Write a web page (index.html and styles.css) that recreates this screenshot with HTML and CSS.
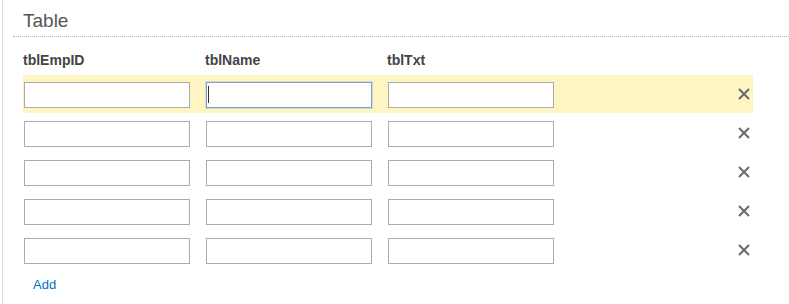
FILE: index.html
```html
<!DOCTYPE html>
<html lang="en">
<head>
    <meta charset="UTF-8">
    <meta name="viewport" content="width=device-width, initial-scale=1.0">
    <title>Table</title>
    <link rel="stylesheet" href="styles.css">
</head>
<body>
    <div class="panel">
        <h2 class="panel-title">Table</h2>

        <div class="grid-table">
            <div class="grid-head">
                <span>tblEmpID</span>
                <span>tblName</span>
                <span>tblTxt</span>
            </div>

            <div class="grid-row is-active">
                <input type="text" class="cell">
                <span class="cell-wrap">
                    <input type="text" class="cell is-focused">
                    <span class="caret"></span>
                </span>
                <input type="text" class="cell">
                <span class="remove" title="Delete">
                    <svg width="12" height="12" viewBox="0 0 12 12"><path d="M1 1 L11 11 M11 1 L1 11"/></svg>
                </span>
            </div>
            <div class="grid-row">
                <input type="text" class="cell">
                <input type="text" class="cell">
                <input type="text" class="cell">
                <span class="remove" title="Delete">
                    <svg width="12" height="12" viewBox="0 0 12 12"><path d="M1 1 L11 11 M11 1 L1 11"/></svg>
                </span>
            </div>
            <div class="grid-row">
                <input type="text" class="cell">
                <input type="text" class="cell">
                <input type="text" class="cell">
                <span class="remove" title="Delete">
                    <svg width="12" height="12" viewBox="0 0 12 12"><path d="M1 1 L11 11 M11 1 L1 11"/></svg>
                </span>
            </div>
            <div class="grid-row">
                <input type="text" class="cell">
                <input type="text" class="cell">
                <input type="text" class="cell">
                <span class="remove" title="Delete">
                    <svg width="12" height="12" viewBox="0 0 12 12"><path d="M1 1 L11 11 M11 1 L1 11"/></svg>
                </span>
            </div>
            <div class="grid-row">
                <input type="text" class="cell">
                <input type="text" class="cell">
                <input type="text" class="cell">
                <span class="remove" title="Delete">
                    <svg width="12" height="12" viewBox="0 0 12 12"><path d="M1 1 L11 11 M11 1 L1 11"/></svg>
                </span>
            </div>

            <a href="#" class="add-link">Add</a>
        </div>
    </div>
</body>
</html>
```

FILE: styles.css
```css
body {
    margin: 0;
    font-family: "Liberation Sans", Arial, sans-serif;
    background: #fff;
}
.panel {
    margin-left: 2px;
    border-left: 1px solid #dcdcdc;
    padding-left: 10px;
    min-height: 304px;
    box-sizing: border-box;
}
.panel-title {
    margin: 0;
    padding: 9px 0 3px 10px;
    font-size: 19px;
    line-height: 24px;
    font-weight: normal;
    color: #555;
    border-bottom: 1px dotted #b5b5b5;
}
.grid-table {
    margin-left: 10px;
    width: 730px;
}
.grid-head {
    display: flex;
    gap: 15px;
    margin-top: 15px;
    margin-bottom: 7px;
    font-size: 14px;
    line-height: 16px;
    font-weight: bold;
    color: #444;
}
.grid-head span {
    width: 167px;
}
.grid-row {
    display: flex;
    align-items: flex-start;
    gap: 16px;
    height: 38px;
    box-sizing: border-box;
    padding: 7px 0 5px 1px;
    margin-bottom: 1px;
}
.grid-row.is-active {
    background-color: #fef5c2;
}
.cell {
    width: 166px;
    height: 26px;
    box-sizing: border-box;
    margin: 0;
    padding: 2px 4px;
    border: 1px solid #ababab;
    border-radius: 0;
    background: #fff;
    font-family: inherit;
    font-size: 13px;
}
.cell.is-focused {
    border-color: #7ba1d6;
    box-shadow: 0 0 0 1px rgba(123, 161, 214, 0.3);
}
.cell-wrap {
    position: relative;
    display: block;
    height: 26px;
}
.caret {
    position: absolute;
    left: 2px;
    top: 4px;
    width: 1px;
    height: 17px;
    background: #333;
}
.remove {
    margin: 6px 3px 0 auto;
    display: flex;
    cursor: pointer;
}
.remove svg path {
    stroke: #6a6a6a;
    stroke-width: 2;
    fill: none;
}
.add-link {
    display: inline-block;
    margin: 7px 0 0 10px;
    font-size: 13px;
    line-height: 15px;
    color: #0072c6;
    text-decoration: none;
}
```
